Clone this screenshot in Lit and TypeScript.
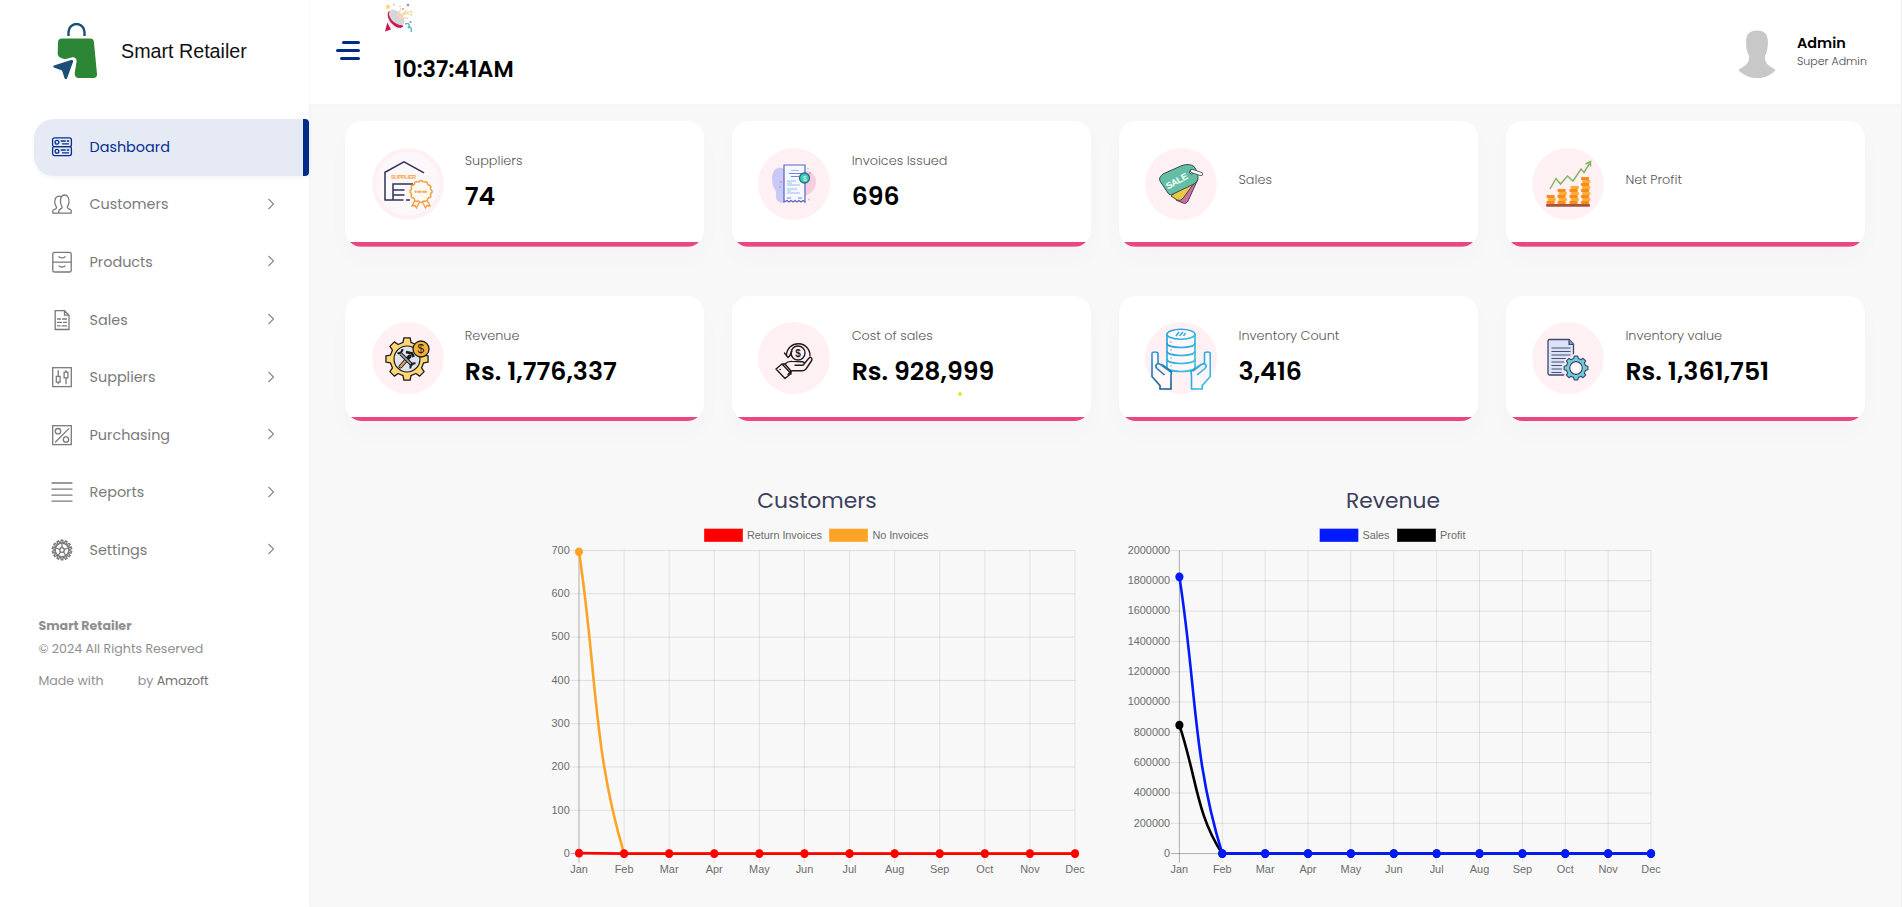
import { LitElement, html, svg, css, nothing } from "lit";
import { customElement, property } from "lit/decorators.js";

/** Outline of a cog with rounded-looking teeth. */
function gear(cx: number, cy: number, outer: number, inner: number, teeth: number): string {
  const pts: string[] = [];
  const step = (Math.PI * 2) / teeth;
  for (let i = 0; i < teeth; i++) {
    const a = i * step - Math.PI / 2;
    const spots: [number, number][] = [
      [inner, -0.3], [outer, -0.19], [outer, 0.19], [inner, 0.3],
    ];
    for (const [r, o] of spots) {
      pts.push(`${(cx + r * Math.cos(a + o * step)).toFixed(2)} ${(cy + r * Math.sin(a + o * step)).toFixed(2)}`);
    }
  }
  return `M${pts.join("L")}Z`;
}

const navIcons: Record<string, unknown> = {
  dashboard: svg`<rect x=".6" y=".8" width="18.8" height="8.9" rx="2"/><rect x=".6" y="9.700" width="18.8" height="8.9" rx="2"/>
    <circle cx="5" cy="5.200" r="1.900"/><circle cx="5" cy="14.200" r="1.900"/><path d="M9.200 4h4M15.200 4h1.500M10.500 6.800h6M9.200 13h4M15.200 13h1.500M10.500 15.800h6"/>`,
  customers: svg`<path d="M.8 19.2v-2.4c0-1.4 3.6-1.6 3.8-3 .1-.9-1.4-2-1.7-4.4C2.500 5 3.800 2.200 7 2.100c1 0 1.900.2 2.500.7M.8 19.2h18.400v-2.600c0-1.500-3.700-1.600-3.900-3.200-.1-1.200 1.500-1.900 1.700-4.900.2-4-1-7.500-4.300-7.500S8.300 3.700 8.500 8.300c.1 2.800 1.700 3.800 1.600 5-.2 1.600-3.300 2-3.300 3.400v2.500"/>`,
  products: svg`<rect x=".8" y=".4" width="18.400" height="19.600" rx="1.600"/><path d="M.8 10.200h18.400M7 4.600c.4 1.600 5.600 1.600 6 0M7 13.800c.4 1.600 5.600 1.600 6 0"/>`,
  sales: svg`<path d="M3.200.7h9.300l4.500 4.500v14.300H3.200zM12.500.7v4.500H17M5.500 9h3M10.500 9h4M5.500 12.400h4M11.500 12.400h3M5.500 15.800h2.500M10 15.800h4.500"/>`,
  suppliers: svg`<rect x=".7" y=".7" width="18.600" height="18.900"/><path d="M6.200 3.600v5.800M6.200 15.200v1.500M4.300 9.400h3.800v5.800H4.300zM14 3.600v1.600M14 10.800v6M12.100 5.200h3.800v5.600h-3.800z"/>`,
  purchasing: svg`<rect x=".7" y=".7" width="18.600" height="18.900"/><path d="M3.500 17L16.800 3.600"/><circle cx="6" cy="6.200" r="2.700"/><circle cx="14" cy="14.500" r="2.700"/>`,
  reports: svg`<path d="M0 1h20M0 7.200h20M0 13.200h20M0 19.200h20"/>`,
  settings: svg`<path d=${gear(10, 10, 9.800, 7.700, 14)}/><circle cx="10" cy="10" r="6.800"/><circle cx="10" cy="10" r="2.300"/><path d="M10 7.700V3.400M12.200 9.300l4.100-1.300M11.400 11.900l2.500 3.500M8.600 11.900l-2.500 3.500M7.800 9.300L3.700 8"/>`,
};

const coinStack = (x: number, top: number) => {
  const rows = [];
  let shift = 0;
  for (let y = 53; y >= top; y -= 3) {
    rows.push(svg`<rect x=${x + (shift % 2 ? 1.2 : 0)} y=${y} width="8.200" height="3.100" rx=".8"
      fill=${shift % 2 ? "#ffad38" : "#f98b1c"}/>`);
    shift++;
  }
  return rows;
};

const cardIcons: Record<string, unknown> = {
  suppliers: svg`<circle cx="36" cy="35.500" r="32" fill="#fbf7fa"/><g fill="none" stroke="#303457" stroke-width="1.500"><path d="M31.500 52H13V24.300L32 13.800l20 11"/>
    <path d="M21 52V36h20M21 42h11.500M21 47h11.500M34 52h4"/></g>
    <text x="19" y="31" font-size="5.600" font-weight="700" textLength="25" fill="#f7a13c">SUPPLIER</text>
    <g stroke="#f59a32" stroke-width="1.300"><path d="M43 52l-3 6 3-.5 1.500 2.500 3-6M55 52l3 6-3-.5-1.500 2.500-3-6" fill="none"/>
    <path d=${gear(49, 43.500, 11, 10, 12)} fill="#fff9f5"/></g>
    <text x="42" y="45" font-size="3.600" font-weight="700" textLength="14" fill="#f7a13c">★★★★★</text>`,
  invoices: svg`<path d="M20 20c7-1 9 3 8 12l1 21c-7 4-12 0-11-7 1-5-4-5-4-15 0-6 2-10 6-11z" fill="#c9c9f6"/>
    <path d="M46 23c7 0 12 4 12 11s-5 12-11 14z" fill="#f5cfe0"/>
    <path d="M26 17h21v37l-2-1.500-2 1.500-2-1.500-2 1.500-2-1.500-2 1.500-2-1.500-2 1.500-2-1.500-3 1.500z" fill="#f5f8ff" stroke="#5e62bd" stroke-width="1.200"/>
    <g fill="none" stroke-width="1"><path d="M33 22.500h8M29 33h9M29 37h13M29 41h10M29 45h13" stroke="#a9b6ee"/><path d="M31 25.500h13M33 28.500h8M29 50h4M40 50h4" stroke="#6d86df"/><path d="M29 35h5M29 43h4" stroke="#7ce1d0"/></g>
    <circle cx="46.500" cy="30" r="5" fill="#3cd2ad" stroke="#2d669d" stroke-width="1.300"/>
    <text x="44.900" y="32.500" font-size="6.500" fill="#def">$</text>
    <circle cx="52" cy="25" r="1" fill="#ef7bc0"/><circle cx="23" cy="34" r=".9" fill="none" stroke="#e470b8" stroke-width=".6"/><circle cx="22" cy="39" r=".7" fill="#748be8"/><circle cx="50" cy="20.500" r=".8" fill="#68d8bd"/><circle cx="51" cy="51.500" r=".9" fill="#8edccc"/>`,
  sale: svg`<g stroke="#3d4a4e" stroke-width="1" stroke-linejoin="round">
    <path d="M50 28l3 3-10 22c-1 2-3 3-5 2l-7-3z" fill="#cf6aa6"/><path d="M45 33l7-2-13 18c-2 3-4 4-7 3l-6-4z" fill="#e9c845"/>
    <path d="M19 25.500L37 17.500c5-1.500 9-1.300 12 1 3 4 4 8 4 11 0 3-2 5-4 6.500L28 46c-2 1-4 1-5-1l-8-12c-1-3 0-5 4-7.500z" fill="#62bfa5"/></g>
    <circle cx="46.500" cy="24" r="2" fill="#fff" stroke="#3d4a4e"/><path d="M47 23l9 3" stroke="#3d4a4e" stroke-width="4" stroke-linecap="round"/><path d="M47 23l9 3" stroke="#f7f7f7" stroke-width="2.400" stroke-linecap="round"/>
    <text x="23" y="41.500" font-size="9.200" font-weight="700" fill="#fff" textLength="23.500" transform="rotate(-29 23 41.500)">SALE</text>`,
  profit: svg`<path d="M18 41l6-10.500 4.500 5.500 7-8 5.500 5 8-12 3 3.500 5.500-9M53.500 16l5-2.500 0 5" fill="none" stroke="#82b567" stroke-width="1.500"/>
    ${coinStack(14.5, 46)}${coinStack(25.5, 40)}${coinStack(37.5, 37)}${coinStack(49, 28)}
    <rect x="14" y="56" width="44" height="2.800" rx="1.200" fill="#a9533e"/>`,
  revenue: svg`<path d=${gear(35, 37, 21.300, 17, 8)} fill="#ffd873" stroke="#1c1c1c" stroke-width="1.300" stroke-linejoin="round"/>
    <circle cx="35" cy="37" r="13" fill="#dfe3ec" stroke="#1c1c1c" stroke-width="1.200"/>
    <path d="M28.500 44.500l9-10" stroke="#1c1c1c" stroke-width="4" stroke-linecap="round"/><path d="M28.500 44.500l5-5.500" stroke="#d99f57" stroke-width="2.300" stroke-linecap="round"/><path d="M34 30l6 1.500 1.500 3.500" stroke="#1c1c1c" stroke-width="2.800" fill="none"/>
    <path d="M28.500 31.500l12 12" stroke="#1c1c1c" stroke-width="3.600"/><path d="M28.500 31.500l12 12" stroke="#9aa2b3" stroke-width="1.700"/>
    <path d="M25.500 31a4 4 0 0 0 5-4M38.500 46.500a4 4 0 0 1 5-5" fill="none" stroke="#1c1c1c" stroke-width="2"/>
    <circle cx="49" cy="27" r="8" fill="#f7b036" stroke="#1c1c1c" stroke-width="1.300"/><text x="45.600" y="31.300" font-size="12" fill="#1c1c1c">$</text>`,
  cost: svg`<g fill="none" stroke="#24191c" stroke-width="1.400" stroke-linejoin="round" stroke-linecap="round">
    <circle cx="40" cy="31" r="7"/><path d="M28.500 33a11.500 11.500 0 1 1 23.500 1M26.500 31l3.500 4.500 3.500-3.500M34 29l-2.500 5"/>
    <path d="M27 42c2-2 4-2.800 7-2.600l10 .3c3 .3 3 3.300 0 3.500h-7M46 42l5-6c2-1.500 3.500.3 2.700 2.500L48 47c-1 1.200-2 1.800-4 1.800H34l-4 3.500"/>
    <path d="M18 47l6-5 9 9.500-6 5zM24 42l3 0 6 7v3M22 47.500h.2"/></g>
    <text x="37.200" y="34.600" font-size="10" font-weight="700" fill="#24191c">$</text>`,
  count: svg`<defs><linearGradient id="blue" x1="0" y1="0" x2="1" y2="1"><stop stop-color="#279be2"/><stop offset="1" stop-color="#36c5dc"/></linearGradient>
    <linearGradient id="deep" x1="0" y1="0" x2="0" y2="1"><stop stop-color="#2e9ad8"/><stop offset="1" stop-color="#175e8c"/></linearGradient></defs>
    <g fill="#fff7fa" stroke="url(#blue)" stroke-width="1.600"><path d="M22 12v33c0 6 28 6 28 0V12"/><ellipse cx="36" cy="12.300" rx="14" ry="5"/>
    <path d="M22 21c0 6 28 6 28 0M22 29c0 6 28 6 28 0M22 37c0 6 28 6 28 0" fill="none"/><path d="M31 14l3-4M34.500 14l3.500-4M38.500 14l2-3" fill="none"/><path d="M25.500 20h1M25.500 28h1M25.500 36h1M25.500 44h1"/>
    <path d="M65.200 31.500v23l-8 9v3.500H46.500V54l-.5-4.500 10-7 3.500-1V31.500c0-2 5.700-2 5.700 0zM52 53l8-6.500c3-3-.5-6-3-4.300l-9 7"/></g>
    <path d="M7 31.500v23l8 9v3.500h11V54l.5-4.500-8-6-5.500-2V31.500c0-2-6-2-6 0zM19.500 53L12 46.500c-3-3 .5-6 3-4.300l11 8" fill="#fff7fa" stroke="url(#deep)" stroke-width="1.600"/>`,
  value: svg`<path d="M17.500 17.500H37l4.500 4.500v31h-24c-1 0-1.500-.6-1.500-1.500V19c0-1 .5-1.500 1.500-1.500z" fill="#dbe3f7" stroke="#41466f" stroke-width="1.300"/><path d="M37 17.500v5h4.500" fill="#7997cd" stroke="#41466f" stroke-width="1.200"/>
    <path d="M19.500 26h19M19.500 29.500h19M19.500 33h19M19.500 36.500h19M19.500 40h13M19.500 43.500h11M19.500 47h11M19.500 50.500h10" stroke="#4a5078" stroke-width="1.100"/>
    <path d=${gear(44, 46, 12, 9.800, 8)} fill="#72cbd6" stroke="#fff0f4" stroke-width="4"/>
    <path d=${gear(44, 46, 12, 9.800, 8)} fill="#72cbd6" stroke="#394f76" stroke-width="1.200" stroke-linejoin="round"/><circle cx="44" cy="46" r="6.300" fill="#fff4f7" stroke="#394f76" stroke-width="1.200"/>`,
};

interface Series { name: string; color: string; values: number[]; }
interface ChartSpec {
  title: string; originX: number; left: number; right: number; max: number; step: number;
  series: Series[]; legend: { box: number; text: number; width: number }[];
}

const MONTHS = ["Jan", "Feb", "Mar", "Apr", "May", "Jun", "Jul", "Aug", "Sep", "Oct", "Nov", "Dec"];
const zeros = (first: number) => [first, ...Array(11).fill(0)];

@customElement("line-chart")
class LineChart extends LitElement {
  @property({ attribute: false }) spec!: ChartSpec;

  static styles = css`
    :host { display: flex; flex-direction: column; align-items: center; width: 550px; }
    .title { margin: 0; font: 400 21.800px/32px Poppins, Inter, sans-serif; color: #3b3f5c; }
    .plot { display: block; width: 550px; height: 370px; margin-top: 4px; }
    .label { font: 10.9px "Liberation Sans", Arial, sans-serif; fill: #6c6c6c; }
  `;

  private curve(values: number[], x: (i: number) => number, y: (v: number) => number) {
    const p = values.map((v, i) => [x(i), y(v)]);
    const floor = y(0);
    const clamp = (v: number) => Math.min(v, floor);
    let d = `M${p[0][0]} ${p[0][1]}`;
    const dist = (a: number[], b: number[]) => Math.hypot(a[0] - b[0], a[1] - b[1]);
    const controls = p.map((cur, i) => {
      const prev = p[i - 1] ?? cur;
      const next = p[i + 1] ?? cur;
      const a = dist(prev, cur);
      const b = dist(cur, next);
      const fa = (0.4 * a) / (a + b);
      const fb = (0.4 * b) / (a + b);
      return [
        cur[0] - fa * (next[0] - prev[0]), clamp(cur[1] - fa * (next[1] - prev[1])),
        cur[0] + fb * (next[0] - prev[0]), clamp(cur[1] + fb * (next[1] - prev[1])),
      ];
    });
    for (let i = 1; i < p.length; i++) {
      d += `C${controls[i - 1][2]} ${controls[i - 1][3]} ${controls[i][0]} ${controls[i][1]} ${p[i][0]} ${p[i][1]}`;
    }
    return d;
  }

  render() {
    const { title, originX, left, right, max, step, series, legend } = this.spec;
    const top = 550.5;
    const bottom = 853.6;
    const x = (i: number) => left + ((right - left) * i) / 11;
    const y = (v: number) => bottom - ((bottom - top) * v) / max;
    const ticks = Array.from({ length: max / step + 1 }, (_, i) => i * step);
    return html`
      <h2 class="title">${title}</h2>
      <svg class="plot" viewBox="${originX} 521 550 370">
        ${series.map((s, i) => svg`
          <rect x=${legend[i].box} y="528.500" width="39" height="13.500" fill=${s.color} stroke="rgba(255,255,255,.35)"/>
          <text class="label" x=${legend[i].text} y="539" textLength=${legend[i].width}>${s.name}</text>`)}
        ${ticks.map((t) => svg`
          <line x1=${left - 8.5} x2=${right} y1=${y(t)} y2=${y(t)} stroke="#000" stroke-opacity=${t ? 0.1 : 0.3}/>
          <text class="label" x=${left - 9.3} y=${y(t) + 3.3} text-anchor="end">${t}</text>`)}
        ${MONTHS.map((m, i) => svg`
          <line x1=${x(i)} x2=${x(i)} y1=${top} y2=${bottom + 9} stroke="#000" stroke-opacity=${i ? 0.09 : 0.3}/>
          <text class="label" x=${x(i)} y="872.800" text-anchor="middle">${m}</text>`)}
        ${[...series].reverse().map((s) => svg`
          <path d=${this.curve(s.values, x, y)} fill="none" stroke=${s.color} stroke-width="2.600"/>
          ${s.values.map((v, i) => svg`<ellipse cx=${x(i)} cy=${y(v)} rx="4.100" ry="4.400" fill=${s.color}/>`)}`)}
      </svg>`;
  }
}

@customElement("stat-card")
class StatCard extends LitElement {
  @property() label = "";
  @property() value = "";
  @property() icon = "";

  static styles = css`
    :host {
      display: flex; box-sizing: border-box; height: 125.500px; padding: 26.500px 0 0 26.200px; gap: 21.200px;
      background: linear-gradient(#e94682, #e94682) bottom / 100% 4.700px no-repeat #fff; border-radius: 17px;
      box-shadow: 0 12px 22px rgba(80, 50, 190, .025);
      font-family: Poppins, Inter, sans-serif;
    }
    .circle { width: 72px; height: 72px; flex: none; border-radius: 50%; background: #fff0f4; }
    .glyph { display: block; width: 72px; height: 72px; overflow: visible; font-family: "Liberation Sans", sans-serif; }
    .copy { display: flex; flex-direction: column; justify-content: center; }
    .copy.filled { justify-content: flex-start; }
    .copy.bare { height: 61px; }
    .label { font-size: 12.800px; line-height: 20px; font-weight: 300; color: #585858; margin-top: 3.500px; }
    .value { font-size: 25.200px; line-height: 36px; font-weight: 600; color: #000; margin-top: 7.800px; }
  `;

  render() {
    return html`
      <div class="circle"><svg class="glyph" viewBox="0 0 72 72">${cardIcons[this.icon]}</svg></div>
      <div class="copy ${this.value ? "filled" : "bare"}">
        <span class="label">${this.label}</span>
        ${this.value ? html`<span class="value">${this.value}</span>` : nothing}
      </div>`;
  }
}

@customElement("app-root")
class AppRoot extends LitElement {
  private nav = ["Dashboard", "Customers", "Products", "Sales", "Suppliers", "Purchasing", "Reports", "Settings"];

  private cards = [
    ["Suppliers", "74", "suppliers"],
    ["Invoices Issued", "696", "invoices"],
    ["Sales", "", "sale"],
    ["Net Profit", "", "profit"],
    ["Revenue", "Rs. 1,776,337", "revenue"],
    ["Cost of sales", "Rs. 928,999", "cost"],
    ["Inventory Count", "3,416", "count"],
    ["Inventory value", "Rs. 1,361,751", "value"],
  ];

  private charts: ChartSpec[] = [
    {
      title: "Customers", originX: 542, left: 579, right: 1075, max: 700, step: 100,
      series: [
        { name: "Return Invoices", color: "#ff0000", values: zeros(1) },
        { name: "No Invoices", color: "#ffa326", values: zeros(697) },
      ],
      legend: [{ box: 704, text: 747, width: 75 }, { box: 829, text: 872.5, width: 56 }],
    },
    {
      title: "Revenue", originX: 1118, left: 1179.4, right: 1651, max: 2000000, step: 200000,
      series: [
        { name: "Sales", color: "#0019ff", values: zeros(1826000) },
        { name: "Profit", color: "#000000", values: zeros(848000) },
      ],
      legend: [{ box: 1319.5, text: 1362.5, width: 27 }, { box: 1397, text: 1440, width: 25.5 }],
    },
  ];

  static styles = css`
    :host {
      display: grid; grid-template-columns: 309px 1fr; width: 1902px; height: 907px; overflow: hidden;
      background: #f8f8f8; font-family: Poppins, Inter, sans-serif; position: relative;
    }
    .sidebar { background: #fff; box-shadow: 0 0 5px rgba(0, 0, 0, .04); z-index: 1; }
    .brand { display: flex; align-items: center; height: 119px; box-sizing: border-box; padding: 0 0 18px 53px; gap: 24px; }
    .logo { width: 44px; height: 56px; }
    .name { font: 19.700px/24px "Liberation Sans", Arial, sans-serif; color: #111; }
    .item {
      display: flex; align-items: center; height: 57.600px; box-sizing: border-box; margin-left: 34px; padding: 0 34px 1px 18px;
      color: #7a7a7a; font-size: 14.400px;
    }
    .item.active { background: #e5eaf4; color: #062f91; border-right: 6px solid #002b87; border-radius: 20px 4px 4px 20px; height: 57px; margin-bottom: .6px; box-shadow: 0 2px 4px rgba(0, 43, 135, .05); padding-right: 28px; }
    .glyph { width: 20px; height: 20px; margin: -1px 17.500px 0 0; fill: none; stroke: currentColor; stroke-width: 1.300; stroke-linecap: round; overflow: visible; }
    .grow { flex: 1; }
    .chevron { width: 8px; height: 12px; fill: none; stroke: #858585; stroke-width: 1.100; margin-top: -2px; }
    .foot { padding: 34.500px 0 0 38.500px; color: #8f8f8f; font-size: 12.600px; line-height: 23px; }
    .foot strong { font-size: 12.600px; font-weight: 700; }
    .made { display: flex; margin-top: 9px; }
    .heart { width: 34px; }
    .maker { color: #727272; margin-left: 3.500px; letter-spacing: -.1px; }

    .header { display: flex; height: 104px; background: #fff; box-shadow: 0 2px 6px rgba(0, 0, 0, .015); box-sizing: border-box; padding-right: 36px; }
    .menu { display: flex; flex-direction: column; align-items: flex-end; gap: 5px; width: 24px; margin: 41px 0 0 27px; }
    .bar { height: 3px; border-radius: 2px; background: #002b87; width: 18px; }
    .bar.mid { width: 24px; }
    .bar.low { width: 20px; }
    .moment { flex: 1; display: flex; flex-direction: column; margin-left: 25px; }
    .party { width: 28px; height: 29px; margin-top: 2.500px; }
    .clock { font-size: 22.500px; font-weight: 600; line-height: 30px; margin: 22px 0 0 9px; color: #000; }
    .user { display: flex; gap: 21.500px; }
    .avatar { width: 38px; height: 48.500px; margin-top: 29.500px; }
    .who { display: flex; flex-direction: column; margin-top: 32px; width: 69px; white-space: nowrap; }
    .who b { font-size: 14.400px; line-height: 22px; font-weight: 600; color: #000; }
    .who span { font-size: 11px; line-height: 14px; color: #444; font-weight: 300; }

    .cards { display: grid; grid-template-columns: repeat(4, 359px); column-gap: 27.900px; row-gap: 49px; padding: 17.300px 0 0 36.400px; }
    .charts { display: flex; gap: 26px; padding: 64px 0 0 233px; }
    .dot { position: absolute; left: 958px; top: 392px; width: 4px; height: 4px; border-radius: 50%; background: #eee52a; z-index: 2; }
    .edge { position: absolute; right: 0; top: 0; width: 1px; height: 907px; background: #f0f0f0; }
  `;

  render() {
    return html`
      <aside class="sidebar">
        <div class="brand">
          <svg class="logo" viewBox="0 0 44 56">
            <path d="M15.500 13V9a8 8 0 0 1 16 0v4" fill="none" stroke="#1d4e78" stroke-width="2.400"/>
            <path d="M9 15.500h28c2.500 0 3.700 1.200 3.900 3.300L44 51c.2 2.600-1 4-3.500 4H26c-3 0-4.500-2-4.300-5l1.800-11c.6-3.500-2-5.500-5-4.500L13 36c-3 0-7-1-8.300-4.500L5 19c.2-2.300 1.500-3.500 4-3.500z" fill="#2c8635"/>
            <path d="M1 42.500l17-5.500c1.500-.4 2.500.4 2 2L14 55.500c-.7 1.500-2 1-2.400-.2L9 47.500l-8-3c-1.200-.5-1.200-1.500 0-2z" fill="#1d4e78"/>
          </svg>
          <span class="name">Smart Retailer</span>
        </div>
        <nav>
          ${this.nav.map((n, i) => html`
            <div class="item ${i === 0 ? "active" : ""}">
              <svg class="glyph" viewBox="0 0 20 20">${navIcons[n.toLowerCase()]}</svg>
              <span class="grow">${n}</span>
              ${i ? html`<svg class="chevron" viewBox="0 0 8 12"><path d="M1.500 1l5 5-5 5"/></svg>` : nothing}
            </div>`)}
        </nav>
        <div class="foot">
          <strong>Smart Retailer</strong>
          <div>© 2024 All Rights Reserved</div>
          <div class="made"><span>Made with</span><span class="heart"></span><span>by</span><span class="maker">Amazoft</span></div>
        </div>
      </aside>
      <main>
        <header class="header">
          <div class="menu"><i class="bar"></i><i class="bar mid"></i><i class="bar low"></i></div>
          <div class="moment">
            <svg class="party" viewBox="0 0 28 29">
              <path d="M0 28.500L4 12l13 13.500-6-1z" fill="#f3eef1"/><path d="M0 28.500l2.300-9 3.700 7z" fill="#c9184e"/>
              <ellipse cx="12" cy="14.500" rx="5.500" ry="9.500" transform="rotate(-43 12 14.500)" fill="#d6d6da"/>
              <path d="M4.200 8.500C1.500 12 7.500 22.500 18 23c-2 2.500-6.500 1.500-10.300-2C3.500 17 2 11 4.200 8.500z" fill="#c9184e" stroke="#c9184e"/>
              <path d="M13 13l3-8M14 14l9-4.500M14 15h9M14 14l8-7" stroke="#f4dcaa" stroke-width="1.400"/><path d="M21.500 10l5.500-2-.5 4.500z" fill="none" stroke="#f4d79a"/>
              <path d="M20 21c6-2 4 3 3 4 3-2 4 1 3 4" fill="none" stroke="#5fb6c9" stroke-width="1.500"/>
              <path d="M3 .8l.8 1.800 1.900.4-1.500 1.200.3 2L3 5.200 1.300 6.200l.3-2L.2 3l2-.4z" fill="#ffd45e"/>
              <circle cx="9" cy="1.500" r=".9" fill="#ccb7cf"/><circle cx="18" cy="6" r="1" fill="#b4a2ba"/><circle cx="23" cy="2" r="1.300" fill="#9d93a8"/><circle cx="15" cy="3" r=".8" fill="#e5b7a0"/><circle cx="25.500" cy="19" r="1" fill="#8c8fa5"/>
            </svg>
            <span class="clock">10:37:41AM</span>
          </div>
          <div class="user">
            <svg class="avatar" viewBox="0 0 38 49"><path d="M19 .5c8 0 11 4.500 11 11 0 7-1 11-3 14.500-.5 5 1.500 8 5 10.500l6 4c-10 11-27.500 11-38 0l6-4c3.500-2.500 5.500-5.500 5-10.500-2-3.500-3-7.500-3-14.500C8 5 11 .5 19 .5z" fill="#c8c8c8"/></svg>
            <div class="who"><b>Admin</b><span>Super Admin</span></div>
          </div>
        </header>
        <section class="cards">
          ${this.cards.map(([label, value, icon]) => html`<stat-card .label=${label} .value=${value} .icon=${icon}></stat-card>`)}
        </section>
        <section class="charts">${this.charts.map((c) => html`<line-chart .spec=${c}></line-chart>`)}</section>
      </main>
      <i class="dot"></i><i class="edge"></i>`;
  }
}
